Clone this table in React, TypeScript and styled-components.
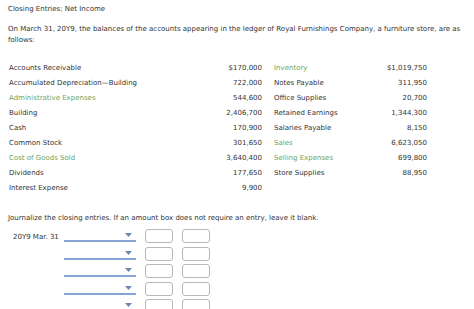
import styled, { createGlobalStyle } from "styled-components";

const GlobalStyle = createGlobalStyle`
  html, body {
    margin: 0;
    padding: 0;
    background: #ffffff;
  }
  body {
    font-family: "DejaVu Sans", Verdana, sans-serif;
    font-size: 7px;
    color: #333333;
  }
`;

type Account = { name: string; amount: string; temp?: boolean };

const LEFT: Account[] = [
  { name: "Accounts Receivable", amount: "$170,000" },
  { name: "Accumulated Depreciation\u2014Building", amount: "722,000" },
  { name: "Administrative Expenses", amount: "544,600", temp: true },
  { name: "Building", amount: "2,406,700" },
  { name: "Cash", amount: "170,900" },
  { name: "Common Stock", amount: "301,650" },
  { name: "Cost of Goods Sold", amount: "3,640,400", temp: true },
  { name: "Dividends", amount: "177,650" },
  { name: "Interest Expense", amount: "9,900" },
];

const RIGHT: Account[] = [
  { name: "Inventory", amount: "$1,019,750", temp: true },
  { name: "Notes Payable", amount: "311,950" },
  { name: "Office Supplies", amount: "20,700" },
  { name: "Retained Earnings", amount: "1,344,300" },
  { name: "Salaries Payable", amount: "8,150" },
  { name: "Sales", amount: "6,623,050", temp: true },
  { name: "Selling Expenses", amount: "699,800", temp: true },
  { name: "Store Supplies", amount: "88,950" },
];

export default function App() {
  return (
    <Page>
      <GlobalStyle />
      <Title>Closing Entries; Net Income</Title>
      <Intro>
        On March 31, 20Y9, the balances of the accounts appearing in the ledger
        of Royal Furnishings Company, a furniture store, are as follows:
      </Intro>

      <Ledger>
        {LEFT.map((left, i) => {
          const right = RIGHT[i];
          return (
            <LedgerRow key={left.name}>
              <Label $temp={left.temp}>{left.name}</Label>
              <Amount>{left.amount}</Amount>
              <Label $temp={right?.temp} $second>
                {right ? right.name : ""}
              </Label>
              <Amount>{right ? right.amount : ""}</Amount>
            </LedgerRow>
          );
        })}
      </Ledger>

      <Instruction>
        Journalize the closing entries. If an amount box does not require an
        entry, leave it blank.
      </Instruction>

      <Journal>
        {[0, 1, 2, 3, 4].map((i) => (
          <EntryRow key={i}>
            <DateCell>{i === 0 ? "20Y9 Mar. 31" : ""}</DateCell>
            <Select>
              <svg width="7" height="4" viewBox="0 0 7 4">
                <path d="M0 0 H7 L3.5 4 Z" fill="#6f86b3" />
              </svg>
            </Select>
            <AmountBox />
            <AmountBox />
          </EntryRow>
        ))}
      </Journal>
    </Page>
  );
}

const Page = styled.div`
  padding: 4px 8px 0 8px;
  width: 474px;
  height: 309px;
  box-sizing: border-box;
  overflow: hidden;
`;

const Title = styled.div`
  line-height: 11px;
`;

const Intro = styled.p`
  margin: 9px 0 0 0;
  line-height: 11px;
  width: 460px;
`;

const Ledger = styled.div`
  margin-top: 14px;
  padding-left: 1px;
  display: flex;
  flex-direction: column;
`;

const LedgerRow = styled.div`
  display: grid;
  grid-template-columns: 180px 73px 106px 59px;
  height: 15px;
  align-items: center;
`;

const Label = styled.span<{ $temp?: boolean; $second?: boolean }>`
  color: ${(p) => (p.$temp ? "#6ea35a" : "#333333")};
  padding-left: ${(p) => (p.$second ? "12px" : "0")};
  white-space: nowrap;
`;

const Amount = styled.span`
  text-align: right;
  white-space: nowrap;
`;

const Instruction = styled.div`
  margin-top: 18px;
  line-height: 11px;
`;

const Journal = styled.div`
  margin-top: 5px;
  display: flex;
  flex-direction: column;
  gap: 3.5px;
`;

const EntryRow = styled.div`
  display: flex;
  align-items: center;
  height: 14px;
`;

const DateCell = styled.div`
  width: 56px;
  padding-left: 5px;
  box-sizing: border-box;
  white-space: nowrap;
  align-self: flex-end;
  line-height: 11px;
`;

const Select = styled.div`
  width: 72px;
  height: 12px;
  border-bottom: 2px solid #86a5d6;
  display: flex;
  align-items: center;
  justify-content: flex-end;
  padding-right: 4px;
  box-sizing: border-box;
  align-self: flex-end;
  margin-bottom: 1px;
  svg {
    display: block;
  }
`;

const AmountBox = styled.div`
  width: 28px;
  height: 14px;
  margin-left: 9px;
  border: 1px solid #b8b8b8;
  border-radius: 3px;
  box-sizing: border-box;
  background: #ffffff;
`;
